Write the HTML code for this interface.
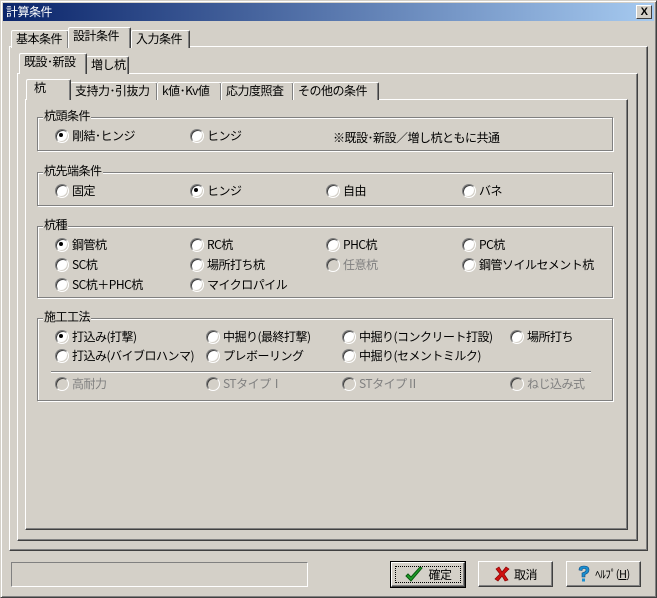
<!DOCTYPE html>
<html><head><meta charset="utf-8">
<style>
*{margin:0;padding:0;box-sizing:border-box}
body{width:657px;height:598px;background:#d4d0c8;font-family:"MS UI Gothic","Noto Sans CJK JP","Liberation Sans",sans-serif;font-size:12px;letter-spacing:-0.5px;color:#000;position:relative;overflow:hidden}
.a{position:absolute}
.win{left:0;top:0;width:657px;height:598px;border-top:1px solid #d4d0c8;border-left:1px solid #d4d0c8;border-right:1px solid #404040;border-bottom:1px solid #404040;box-shadow:inset 1px 1px 0 #fff,inset -1px -1px 0 #808080}
.title{left:3px;top:3px;width:651px;height:18px;background:linear-gradient(90deg,#0a246a,#a6caf0);color:#fff;font-size:12px;line-height:18px;padding-left:3px}
.close{left:636px;top:5px;width:16px;height:14px;background:#d4d0c8;border:1px solid;border-color:#fff #404040 #404040 #fff;font:bold 11px "Liberation Sans",sans-serif;text-align:center;line-height:12px}
.panel{border:1px solid;border-color:#fff #404040 #404040 #fff;box-shadow:inset -1px -1px 0 #808080}
.tab{height:18px;border:1px solid;border-bottom:none;border-color:#fff #404040 #404040 #fff;box-shadow:inset -1px 0 0 #808080;border-radius:2px 2px 0 0;line-height:16px;padding-left:4px;white-space:nowrap;background:#d4d0c8}
.tab.sel{height:21px;z-index:2}
.grp{border:1px solid #808080;box-shadow:1px 1px 0 #fff,inset 1px 1px 0 #fff}
.gl{background:#d4d0c8;padding:0 1px;line-height:12px;white-space:nowrap}
.r{white-space:nowrap;line-height:13px;padding-left:17px}
.r:before{content:"";position:absolute;left:0;top:0;width:12px;height:12px;border-radius:50%;background:#fff;border:1px solid;border-color:#808080 #fff #fff #808080;box-shadow:inset 1px 1px 0 #404040,inset -1px -1px 0 #d4d0c8}
.r.on:after{content:"";position:absolute;left:4px;top:4px;width:4px;height:4px;border-radius:50%;background:#000}
.d{color:#808080}
.d:before{background:#d4d0c8}
.btn{height:26px;border:1px solid;border-color:#fff #404040 #404040 #fff;box-shadow:inset -1px -1px 0 #808080;display:flex;align-items:center;justify-content:center;gap:4px}
</style></head><body>
<div class="a win"></div>
<div class="a title">計算条件</div>
<div class="a close">X</div>

<div class="a panel" style="left:9px;top:46px;width:639px;height:505px"></div>
<div class="a tab" style="left:11px;top:30px;width:58px">基本条件</div>
<div class="a tab sel" style="left:68px;top:27px;width:63px">設計条件</div>
<div class="a tab" style="left:131px;top:30px;width:59px">入力条件</div>

<div class="a panel" style="left:17px;top:73px;width:621px;height:468px"></div>
<div class="a tab sel" style="left:19px;top:53px;width:68px">既設･新設</div>
<div class="a tab" style="left:86px;top:56px;width:43px">増し杭</div>

<div class="a panel" style="left:25px;top:99px;width:603px;height:431px"></div>
<div class="a tab sel" style="left:26px;top:79px;width:45px;padding-left:7px">杭</div>
<div class="a tab" style="left:70px;top:82px;width:88px">支持力･引抜力</div>
<div class="a tab" style="left:157px;top:82px;width:65px">k値･Kv値</div>
<div class="a tab" style="left:221px;top:82px;width:73px">応力度照査</div>
<div class="a tab" style="left:293px;top:82px;width:86px">その他の条件</div>

<div class="a grp" style="left:37px;top:117px;width:576px;height:34px"></div>
<div class="a gl" style="left:43px;top:110px">杭頭条件</div>
<div class="a r on" style="left:55px;top:129px">剛結･ヒンジ</div>
<div class="a r" style="left:190px;top:129px">ヒンジ</div>
<div class="a" style="left:333px;top:129px">※既設･新設／増し杭ともに共通</div>

<div class="a grp" style="left:37px;top:172px;width:576px;height:34px"></div>
<div class="a gl" style="left:43px;top:165px">杭先端条件</div>
<div class="a r" style="left:55px;top:184px">固定</div>
<div class="a r on" style="left:190px;top:184px">ヒンジ</div>
<div class="a r" style="left:326px;top:184px">自由</div>
<div class="a r" style="left:462px;top:184px">バネ</div>

<div class="a grp" style="left:37px;top:226px;width:576px;height:72px"></div>
<div class="a gl" style="left:43px;top:219px">杭種</div>
<div class="a r on" style="left:55px;top:238px">鋼管杭</div>
<div class="a r" style="left:190px;top:238px">RC杭</div>
<div class="a r" style="left:326px;top:238px">PHC杭</div>
<div class="a r" style="left:462px;top:238px">PC杭</div>
<div class="a r" style="left:55px;top:258px">SC杭</div>
<div class="a r" style="left:190px;top:258px">場所打ち杭</div>
<div class="a r d" style="left:326px;top:258px">任意杭</div>
<div class="a r" style="left:462px;top:258px">鋼管ソイルセメント杭</div>
<div class="a r" style="left:55px;top:278px">SC杭＋PHC杭</div>
<div class="a r" style="left:190px;top:278px">マイクロパイル</div>

<div class="a grp" style="left:37px;top:318px;width:576px;height:83px"></div>
<div class="a gl" style="left:43px;top:311px">施工工法</div>
<div class="a r on" style="left:55px;top:330px">打込み(打撃)</div>
<div class="a r" style="left:206px;top:330px">中掘り(最終打撃)</div>
<div class="a r" style="left:342px;top:330px">中掘り(コンクリート打設)</div>
<div class="a r" style="left:510px;top:330px">場所打ち</div>
<div class="a r" style="left:55px;top:349px">打込み(バイブロハンマ)</div>
<div class="a r" style="left:206px;top:349px">プレボーリング</div>
<div class="a r" style="left:342px;top:349px">中掘り(セメントミルク)</div>
<div class="a" style="left:51px;top:371px;width:540px;height:2px;border-top:1px solid #808080;border-bottom:1px solid #fff"></div>
<div class="a r d" style="left:55px;top:377px">高耐力</div>
<div class="a r d" style="left:206px;top:377px">STタイプⅠ</div>
<div class="a r d" style="left:342px;top:377px">STタイプⅡ</div>
<div class="a r d" style="left:510px;top:377px">ねじ込み式</div>

<div class="a" style="left:11px;top:562px;width:297px;height:25px;border:1px solid;border-color:#808080 #fff #fff #808080"></div>

<div class="a" style="left:390px;top:561px;width:76px;height:27px;border:1px solid #000"></div>
<div class="a btn" style="left:391px;top:562px;width:74px;height:25px">
<div class="a" style="left:3px;top:3px;right:3px;bottom:3px;border:1px dotted #000"></div>
<svg width="20" height="18" viewBox="0 0 20 18"><path d="M2 10 L7 15 L18 2 L16 1 L7 11 L4 8 Z" fill="#1e9e2a" stroke="#0a5a10" stroke-width="1"/></svg><span>確定</span></div>
<div class="a btn" style="left:478px;top:561px;width:75px">
<svg width="16" height="16" viewBox="0 0 16 16"><path d="M2 3 L5 1 L8 6 L12 1 L15 3 L10 8 L14 14 L11 15 L8 10 L4 15 L1 13 L6 8 Z" fill="#d01010" stroke="#800" stroke-width="0.7"/></svg><span>取消</span></div>
<div class="a btn" style="left:566px;top:561px;width:75px">
<svg width="14" height="18" viewBox="0 0 14 18"><path d="M2 5 Q2 1 7 1 Q12 1 12 5 Q12 8 8 9.5 L8 12 L5 12 L5 8 Q9 7 9 5 Q9 3.5 7 3.5 Q5 3.5 5 5.5 Z" fill="#1a8fd0" stroke="#0a4a80" stroke-width="0.6"/><rect x="5" y="13.5" width="3" height="3" fill="#1a8fd0"/></svg><span style="font-size:11px">ﾍﾙﾌﾟ(<u>H</u>)</span></div>
</body></html>
